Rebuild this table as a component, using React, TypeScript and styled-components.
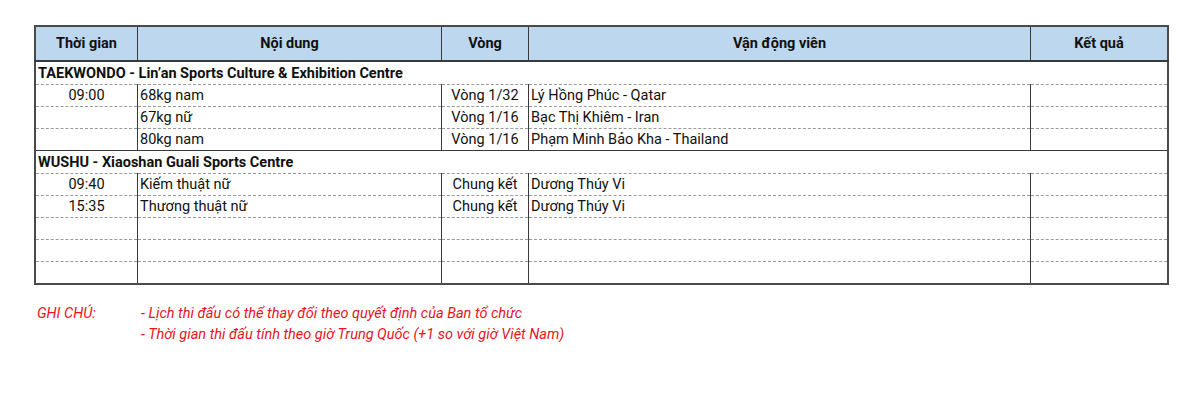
import React from "react";
import styled, { createGlobalStyle } from "styled-components";

const GlobalStyle = createGlobalStyle`
  html, body {
    margin: 0;
    padding: 0;
    background: #ffffff;
  }
  body {
    font-family: Roboto, "Liberation Sans", sans-serif;
    color: #111;
  }
`;

const Page = styled.div`
  width: 1200px;
  height: 413px;
  padding: 25px 0 0 34px;
  box-sizing: border-box;
`;

const Table = styled.table`
  border-collapse: collapse;
  table-layout: fixed;
  border: 2px solid #4a4a4a;
  font-size: 14.5px;
`;

const HeadCell = styled.th<{ $w: number }>`
  width: ${(p) => p.$w}px;
  height: 33px;
  background: #bdd7ee;
  border: 1px solid #3a3a3a;
  border-bottom: 2px solid #3a3a3a;
  font-weight: 700;
  font-size: 14.5px;
  text-align: center;
  padding: 0;
`;

const SectionCell = styled.td<{ $solidTop?: boolean }>`
  height: 22px;
  padding: 0 0 0 2px;
  font-weight: 700;
  font-size: 14.5px;
  border-top: ${(p) => (p.$solidTop ? "1.5px solid #3a3a3a" : "none")};
  border-bottom: 1px dashed #9a9a9a;
`;

const Cell = styled.td<{ $align?: "left" | "center"; $last?: boolean }>`
  height: 21px;
  padding: 0 2px;
  text-align: ${(p) => p.$align ?? "left"};
  border-left: 1px solid #3a3a3a;
  border-right: 1px solid #3a3a3a;
  border-bottom: ${(p) => (p.$last ? "1.5px solid #3a3a3a" : "1px dashed #9a9a9a")};
  white-space: nowrap;
  overflow: hidden;
`;

const Notes = styled.div`
  display: grid;
  grid-template-columns: 104px auto;
  row-gap: 4px;
  margin-top: 20px;
  padding-left: 3px;
  color: #e8141c;
  font-style: italic;
  font-size: 14.5px;
`;

const NoteLabel = styled.div``;
const NoteText = styled.div`
  grid-column: 2;
`;

type Row = { time: string; event: string; round: string; athlete: string };

const sections: { title: string; rows: Row[]; blanks: number }[] = [
  {
    title: "TAEKWONDO - Lin’an Sports Culture & Exhibition Centre",
    rows: [
      { time: "09:00", event: "68kg nam", round: "Vòng 1/32", athlete: "Lý Hồng Phúc - Qatar" },
      { time: "", event: "67kg nữ", round: "Vòng 1/16", athlete: "Bạc Thị Khiêm - Iran" },
      { time: "", event: "80kg nam", round: "Vòng 1/16", athlete: "Phạm Minh Bảo Kha - Thailand" },
    ],
    blanks: 0,
  },
  {
    title: "WUSHU - Xiaoshan Guali Sports Centre",
    rows: [
      { time: "09:40", event: "Kiếm thuật nữ", round: "Chung kết", athlete: "Dương Thúy Vi" },
      { time: "15:35", event: "Thương thuật nữ", round: "Chung kết", athlete: "Dương Thúy Vi" },
    ],
    blanks: 3,
  },
];

const columns = [
  { label: "Thời gian", w: 101 },
  { label: "Nội dung", w: 303 },
  { label: "Vòng", w: 86 },
  { label: "Vận động viên", w: 501 },
  { label: "Kết quả", w: 136 },
];

export default function App() {
  return (
    <Page>
      <GlobalStyle />
      <Table>
        <thead>
          <tr>
            {columns.map((c) => (
              <HeadCell key={c.label} $w={c.w}>
                {c.label}
              </HeadCell>
            ))}
          </tr>
        </thead>
        <tbody>
          {sections.map((s, si) => {
            const all: Row[] = [
              ...s.rows,
              ...Array.from({ length: s.blanks }, () => ({ time: "", event: "", round: "", athlete: "" })),
            ];
            return (
              <React.Fragment key={s.title}>
                <tr>
                  <SectionCell colSpan={5} $solidTop={si > 0}>
                    {s.title}
                  </SectionCell>
                </tr>
                {all.map((r, i) => {
                  const last = i === all.length - 1;
                  return (
                    <tr key={i}>
                      <Cell $align="center" $last={last}>{r.time}</Cell>
                      <Cell $last={last}>{r.event}</Cell>
                      <Cell $align="center" $last={last}>{r.round}</Cell>
                      <Cell $last={last}>{r.athlete}</Cell>
                      <Cell $last={last}></Cell>
                    </tr>
                  );
                })}
              </React.Fragment>
            );
          })}
        </tbody>
      </Table>
      <Notes>
        <NoteLabel>GHI CHÚ:</NoteLabel>
        <NoteText>- Lịch thi đấu có thể thay đổi theo quyết định của Ban tổ chức</NoteText>
        <NoteText>- Thời gian thi đấu tính theo giờ Trung Quốc (+1 so với giờ Việt Nam)</NoteText>
      </Notes>
    </Page>
  );
}
